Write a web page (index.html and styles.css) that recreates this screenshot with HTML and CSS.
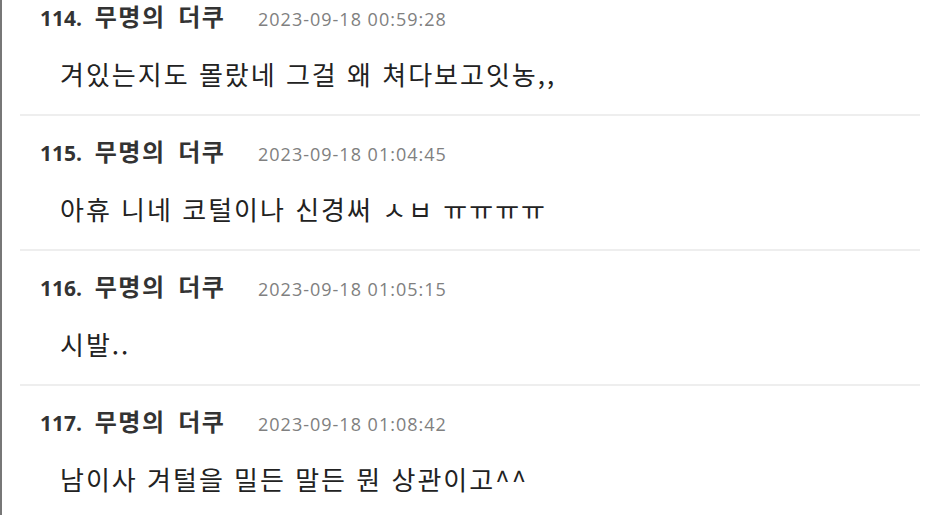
FILE: index.html
```html
<!DOCTYPE html>
<html lang="ko">
<head>
    <meta charset="UTF-8">
    <meta name="viewport" content="width=device-width, initial-scale=1.0">
    <title> 댓글 </title>
    <link rel="stylesheet" href="styles.css">
</head>
<body>
    <div id = "page">
        <div id = "comment_list">
            <div class = "comment">
                <div class = "comment_head">
                    <span class = "writer"><span class = "num">114.</span> 무명의 더쿠</span>
                    <span class = "date">2023-09-18 00:59:28</span>
                </div>
                <div class = "comment_text">겨있는지도 몰랐네 그걸 왜 쳐다보고잇농,,</div>
            </div>
            <div class = "comment">
                <div class = "comment_head">
                    <span class = "writer"><span class = "num">115.</span> 무명의 더쿠</span>
                    <span class = "date">2023-09-18 01:04:45</span>
                </div>
                <div class = "comment_text">아휴 니네 코털이나 신경써 ㅅㅂ ㅠㅠㅠㅠ</div>
            </div>
            <div class = "comment">
                <div class = "comment_head">
                    <span class = "writer"><span class = "num">116.</span> 무명의 더쿠</span>
                    <span class = "date">2023-09-18 01:05:15</span>
                </div>
                <div class = "comment_text">시발..</div>
            </div>
            <div class = "comment">
                <div class = "comment_head">
                    <span class = "writer"><span class = "num">117.</span> 무명의 더쿠</span>
                    <span class = "date">2023-09-18 01:08:42</span>
                </div>
                <div class = "comment_text">남이사 겨털을 밀든 말든 뭔 상관이고^^</div>
            </div>
        </div>
    </div>
</body>
</html>
```

FILE: styles.css
```css
* {
    margin: 0px;
    padding: 0px;
}

body {
    background-color: #ffffff;
    font-family: "Open Sans", "Noto Sans CJK KR", sans-serif;
    overflow: hidden;
}

#page {
    border-left: 2px solid #777777;
    height: 100vh;
    overflow: hidden;
}

/* list is scrolled a bit, top of comment 114 is cut off */
#comment_list {
    margin-top: -19px;
    padding-left: 18px;
    padding-right: 6px;
}

.comment {
    border-bottom: 2px solid #eeeeee;
    padding-top: 21px;
    padding-bottom: 22px;
}

.comment_head {
    display: flex;
    align-items: baseline;
    padding-left: 20px;
    height: 30px;
    line-height: 30px;
}

.writer {
    color: #333333;
    font-size: 24px;
    font-weight: bold;
    letter-spacing: 1.5px;
    word-spacing: 5px;
    width: 218px;
}

.writer .num {
    font-size: 21px;
    letter-spacing: 0px;
}

.date {
    color: #808080;
    font-size: 18px;
    letter-spacing: 1px;
}

.comment_text {
    color: #222222;
    font-family: "Noto Sans CJK KR", sans-serif;
    font-size: 26px;
    letter-spacing: 2px;
    line-height: 36px;
    margin-top: 24px;
    padding-left: 40px;
}
```
